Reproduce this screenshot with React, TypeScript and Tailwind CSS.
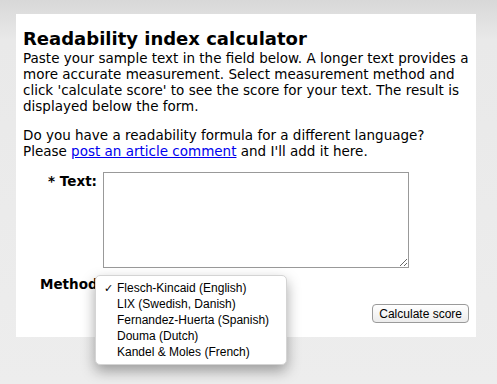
export default function App() {
  const methods = [
    'Flesch-Kincaid (English)',
    'LIX (Swedish, Danish)',
    'Fernandez-Huerta (Spanish)',
    'Douma (Dutch)',
    'Kandel & Moles (French)',
  ];

  return (
    <div className="min-h-[384px] w-[497px] bg-[linear-gradient(to_bottom,#d8d8d8_0px,#e9e9e9_40px,#ededed_100%)] pt-[14px] pl-[16px] font-['DejaVu_Sans',Verdana,sans-serif] text-black">
      <div className="w-[460px] bg-white px-[7px] pt-[13px] pb-[14px]">
        <h1 className="text-[18px] leading-[23px] font-bold">Readability index calculator</h1>
        <p className="text-[13.5px] leading-[16px]">
          Paste your sample text in the field below. A longer text provides a more accurate measurement. Select
          measurement method and click 'calculate score' to see the score for your text. The result is displayed
          below the form.
        </p>
        <p className="mt-[13px] text-[13.5px] leading-[16px]">
          Do you have a readability formula for a different language?
          <br />
          Please{' '}
          <a href="#" className="text-[#0000ee] underline">
            post an article comment
          </a>{' '}
          and I'll add it here.
        </p>

        <form className="mt-[13px]">
          <div className="flex gap-[6px]">
            <label className="w-[74px] pt-[1px] text-right text-[13.5px] leading-[16px] font-bold">* Text:</label>
            <textarea className="h-[96px] w-[306px] resize border border-[#999] bg-white" />
          </div>

          <div className="relative mt-[4px] flex h-[24px] items-center">
            <label className="ml-[17px] text-[13.5px] leading-[16px] font-bold">Method:</label>
            <div className="absolute top-[3px] left-[72px] z-10 w-[192px] rounded-[5px] border border-[#d4d4d4] bg-white py-[4px] shadow-[0_6px_14px_rgba(0,0,0,0.35)] font-['Liberation_Sans',sans-serif] text-[12px]">
              {methods.map((m, i) => (
                <div key={m} className="flex h-[16px] items-center">
                  <span className="w-[21px] pl-[8px] text-[11px]">{i === 0 ? '✓' : ''}</span>
                  <span>{m}</span>
                </div>
              ))}
            </div>
          </div>

          <div className="mt-[8px] flex justify-end">
            <button
              type="button"
              className="h-[19px] rounded-[4px] border border-[#9a9a9a] bg-[linear-gradient(to_bottom,#ffffff,#ececec)] px-[6px] font-['Liberation_Sans',sans-serif] text-[12px] leading-[16px]"
            >
              Calculate score
            </button>
          </div>
        </form>
      </div>
    </div>
  );
}
